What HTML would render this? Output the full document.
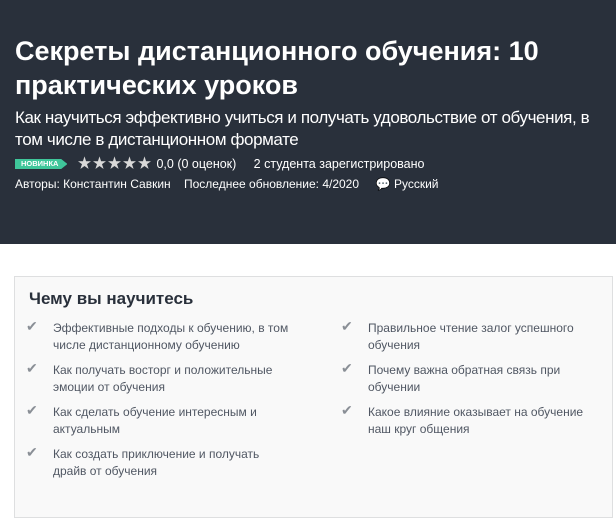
<!DOCTYPE html>
<html><head><meta charset="utf-8"><style>
body{margin:0;width:616px;height:498px;overflow:hidden;background:#fff;font-family:"Liberation Sans","Noto Sans CJK SC",sans-serif;}
.hd{position:absolute;left:0;top:0;width:616px;height:244px;background:#29303b;color:#fff;}
.t{position:absolute;left:15px;top:34px;font-size:27px;font-weight:bold;line-height:34px;width:590px;}
.s{position:absolute;left:15px;top:107px;font-size:17px;line-height:22px;width:610px;letter-spacing:-0.4px;white-space:nowrap;}
.r{position:absolute;left:15px;top:153px;font-size:12.5px;white-space:nowrap;}
.m{position:absolute;left:15px;top:177px;font-size:12px;white-space:nowrap;}
.badge{display:inline-block;background:#3fc69a;color:#fff;font-size:7.5px;font-weight:bold;padding:0 9px 0 6px;height:10px;line-height:10px;vertical-align:2px;clip-path:polygon(0 0,88% 0,100% 50%,88% 100%,0 100%);}
.st{color:#d8d8d8;font-size:14px;letter-spacing:1px;margin:0 4px 0 10px;}
.box{position:absolute;left:14px;top:276px;width:597px;height:240px;background:#f9f9f9;border:1px solid #dedfe0;}
.h{position:absolute;left:14px;top:12px;font-size:17px;font-weight:bold;color:#29303b;}
.it{position:absolute;font-size:12px;line-height:17px;color:#505763;width:240px;}
.it:before{content:"✔";position:absolute;left:-27px;top:-2px;color:#8a8f96;font-size:14px;}
</style></head><body>
<div class="hd">
<div class="t">Секреты дистанционного обучения: 10 практических уроков</div>
<div class="s">Как научиться эффективно учиться и получать удовольствие от обучения, в<br>том числе в дистанционном формате</div>
<div class="r"><span class="badge">НОВИНКА</span><span class="st">★★★★★</span>0,0 (0 оценок) &nbsp;&nbsp;&nbsp; 2 студента зарегистрировано</div>
<div class="m">Авторы: Константин Савкин &nbsp;&nbsp; Последнее обновление: 4/2020 &nbsp;&nbsp;&nbsp; 💬 Русский</div>
</div>
<div class="box">
<div class="h">Чему вы научитесь</div>
<div class="it" style="left:38px;top:43px">Эффективные подходы к обучению, в том числе дистанционному обучению</div>
<div class="it" style="left:38px;top:85px">Как получать восторг и положительные эмоции от обучения</div>
<div class="it" style="left:38px;top:127px">Как сделать обучение интересным и актуальным</div>
<div class="it" style="left:38px;top:169px">Как создать приключение и получать драйв от обучения</div>
<div class="it" style="left:353px;top:43px">Правильное чтение залог успешного обучения</div>
<div class="it" style="left:353px;top:85px">Почему важна обратная связь при обучении</div>
<div class="it" style="left:353px;top:127px">Какое влияние оказывает на обучение наш круг общения</div>
</div>
</body></html>
